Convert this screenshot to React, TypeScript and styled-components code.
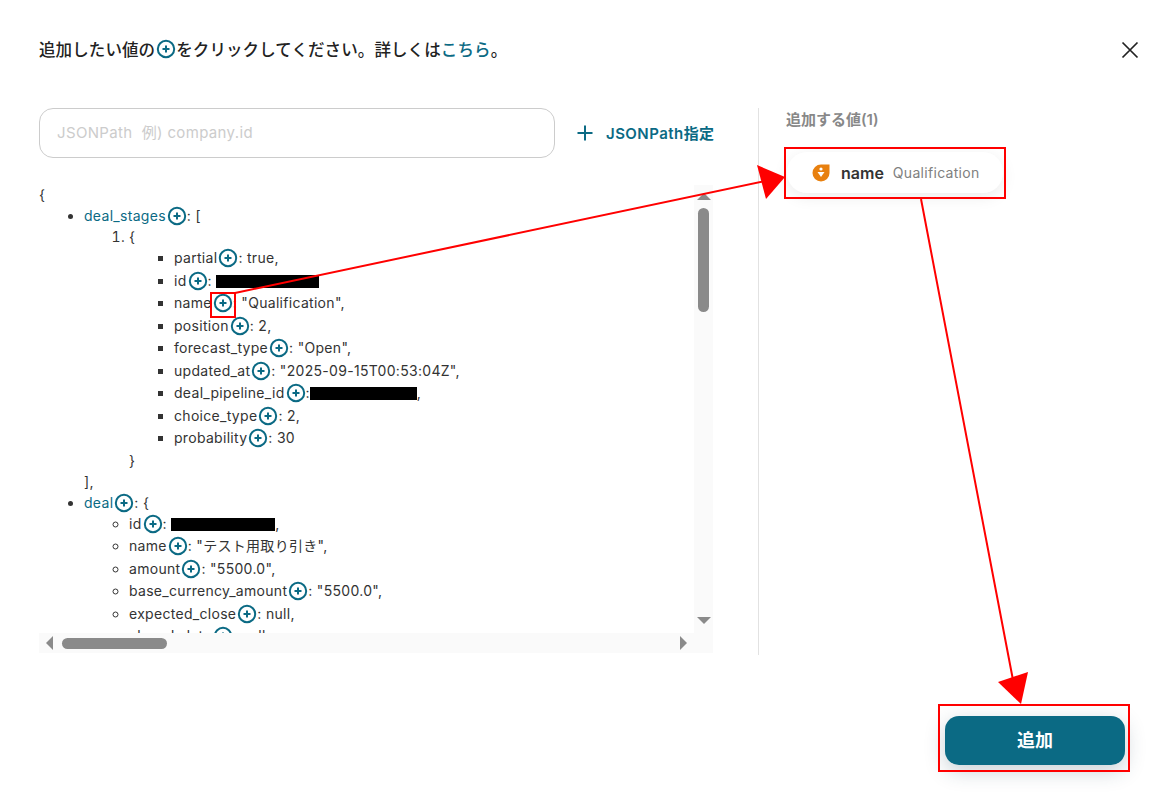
import React from "react"
import styled, {createGlobalStyle} from "styled-components"

const TEAL = "#0b6a84"

const GlobalStyle = createGlobalStyle`
  html, body {
    margin: 0;
    padding: 0;
    background: #fff;
  }
  body {
    font-family: Inter, "Noto Sans CJK JP", sans-serif;
    color: #333;
  }
`

const StyledPage = styled.div`
  position: relative;
  width: 1164px;
  height: 809px;
  overflow: hidden;
  box-sizing: border-box;
  padding: 38px 24px 0 39px;
`

const StyledHeader = styled.div`
  display: flex;
  justify-content: space-between;
  align-items: center;
  height: 24px;
`

const StyledTitle = styled.div`
  display: flex;
  align-items: center;
  margin-top: -2px;
  font-family: "Noto Sans CJK JP", sans-serif;
  font-size: 16.5px;
  letter-spacing: 0.1px;
  font-weight: 500;
  color: #222;
`

const StyledLink = styled.span`
  color: ${TEAL};
`

const StyledCloseButton = styled.div`
  display: flex;
  width: 18px;
  height: 18px;
  margin-right: 1px;
`

const StyledBody = styled.div`
  display: flex;
  margin-top: 46px;
  height: 547px;
`

const StyledLeft = styled.div`
  width: 719px;
  flex-shrink: 0;
`

const StyledSearchRow = styled.div`
  display: flex;
  align-items: center;
`

const StyledInput = styled.div`
  box-sizing: border-box;
  width: 516px;
  height: 50px;
  border: 1px solid #ccc;
  border-radius: 14px;
  padding: 0 0 3px 17px;
  display: flex;
  align-items: center;
  font-size: 15px;
  letter-spacing: 0.35px;
  color: #ccc;
`

const StyledAddPath = styled.div`
  display: flex;
  align-items: center;
  margin-left: 22px;
  gap: 13px;
  padding-bottom: 1px;
  font-size: 15px;
  letter-spacing: 0.45px;
  font-weight: 600;
  color: ${TEAL};
  white-space: nowrap;
`

const StyledTreeBox = styled.div`
  display: grid;
  grid-template-columns: 655px 19px;
  grid-template-rows: 448px 20px;
  width: 674px;
  margin-top: 27px;
`

const StyledTree = styled.div`
  overflow: hidden;
  margin-top: -1px;
  font-size: 14px;
  line-height: 21px;
  letter-spacing: 0.3px;
  white-space: nowrap;

  ul, ol {
    margin: 0;
    padding-left: 45px;
  }
`

const StyledFields = styled.ul`
  li {
    line-height: 22.5px;
  }
`

const StyledKey = styled.span`
  color: ${TEAL};
`

const StyledRedaction = styled.span<{$width: number}>`
  display: inline-block;
  width: ${p => p.$width}px;
  height: 13px;
  background: #000;
  vertical-align: -2px;
`

const StyledPlus = styled.svg`
  display: inline-block;
  width: 20px;
  height: 20px;
  margin-left: 1px;
  vertical-align: -5px;
`

const StyledVerticalBar = styled.div`
  display: flex;
  flex-direction: column;
  align-items: center;
  background: #fafafa;
  padding-top: 8px;
`

const StyledHorizontalBar = styled.div`
  display: flex;
  align-items: center;
  background: #fafafa;
  padding-left: 7px;
`

const StyledCorner = styled.div`
  background: #fafafa;
`

const StyledArrowUp = styled.div`
  border-left: 7px solid transparent;
  border-right: 7px solid transparent;
  border-bottom: 7px solid #8a8a8a;
`

const StyledArrowDown = styled.div`
  border-left: 7px solid transparent;
  border-right: 7px solid transparent;
  border-top: 7px solid #8a8a8a;
  margin-top: 305px;
`

const StyledArrowLeft = styled.div`
  border-top: 7px solid transparent;
  border-bottom: 7px solid transparent;
  border-right: 7px solid #8a8a8a;
`

const StyledArrowRight = styled.div`
  border-top: 7px solid transparent;
  border-bottom: 7px solid transparent;
  border-left: 7px solid #8a8a8a;
  margin-left: 513px;
`

const StyledThumbVertical = styled.div`
  width: 11px;
  height: 104px;
  margin-top: 8px;
  border-radius: 6px;
  background: #8a8a8a;
`

const StyledThumbHorizontal = styled.div`
  width: 105px;
  height: 11px;
  margin-left: 9px;
  border-radius: 6px;
  background: #8a8a8a;
`

const StyledRight = styled.div`
  flex: 1;
  border-left: 1px solid #e2e2e2;
  padding-left: 27px;
`

const StyledRightHeading = styled.div`
  font-size: 15px;
  font-weight: 600;
  line-height: 24px;
  color: #888;
`

const StyledChip = styled.div`
  display: flex;
  align-items: center;
  box-sizing: border-box;
  width: 216px;
  height: 41px;
  margin-top: 20px;
  margin-left: 1px;
  padding-left: 25px;
  border-radius: 20px;
  background: #fff;
  box-shadow: 0 4px 16px rgba(0, 0, 0, 0.08);
`

const StyledChipName = styled.span`
  margin-left: 11px;
  font-size: 16px;
  font-weight: 600;
  color: #333;
`

const StyledChipValue = styled.span`
  margin-left: 9px;
  font-size: 14px;
  letter-spacing: 0.3px;
  color: #808080;
`

const StyledFooter = styled.div`
  display: flex;
  justify-content: flex-end;
  margin-top: 61px;
  padding-right: 15px;
`

const StyledSubmit = styled.button`
  width: 180px;
  height: 49px;
  padding: 0 0 3px;
  border: none;
  border-radius: 14px;
  background: ${TEAL};
  color: #fff;
  font-family: "Noto Sans CJK JP", sans-serif;
  font-size: 18px;
  font-weight: 700;
  box-shadow: 0 6px 20px rgba(40, 70, 90, 0.25);
`

const StyledAnnotations = styled.svg`
  position: absolute;
  top: 0;
  left: 0;
  width: 1164px;
  height: 809px;
  pointer-events: none;
`

const Plus: React.FC = () => (
    <StyledPlus viewBox="0 0 20 20">
        <circle cx="10" cy="10" r="8.2" fill="none" stroke={TEAL} strokeWidth="2"/>
        <path d="M10 6.5v7M6.5 10h7" stroke={TEAL} strokeWidth="2" fill="none"/>
    </StyledPlus>
)

const Key: React.FC<{children: React.ReactNode}> = ({children}) => (
    <>{children}<Plus/></>
)

const Tree: React.FC = () => (
    <StyledTree>
        {"{"}
        <ul>
            <li>
                <Key><StyledKey>deal_stages</StyledKey></Key>: [
                <ol>
                    <li>
                        {"{"}
                        <StyledFields>
                            <li><Key>partial</Key>: true,</li>
                            <li><Key>id</Key>: <StyledRedaction $width={103}/></li>
                            <li><Key>name</Key>: "Qualification",</li>
                            <li><Key>position</Key>: 2,</li>
                            <li><Key>forecast_type</Key>: "Open",</li>
                            <li><Key>updated_at</Key>: "2025-09-15T00:53:04Z",</li>
                            <li><Key>deal_pipeline_id</Key>:<StyledRedaction $width={107}/>,</li>
                            <li><Key>choice_type</Key>: 2,</li>
                            <li><Key>probability</Key>: 30</li>
                        </StyledFields>
                        {"}"}
                    </li>
                </ol>
                ],
            </li>
            <li>
                <Key><StyledKey>deal</StyledKey></Key>: {"{"}
                <StyledFields>
                    <li><Key>id</Key>: <StyledRedaction $width={104}/>,</li>
                    <li><Key>name</Key>: "テスト用取り引き",</li>
                    <li><Key>amount</Key>: "5500.0",</li>
                    <li><Key>base_currency_amount</Key>: "5500.0",</li>
                    <li><Key>expected_close</Key>: null,</li>
                    <li><Key>closed_date</Key>: null,</li>
                    <li><Key>created_at</Key>: null,</li>
                </StyledFields>
            </li>
        </ul>
    </StyledTree>
)

const App: React.FC = () => (
    <StyledPage>
        <GlobalStyle/>
        <StyledHeader>
            <StyledTitle>
                追加したい値の<Plus/>をクリックしてください。詳しくは<StyledLink>こちら</StyledLink>。
            </StyledTitle>
            <StyledCloseButton>
                <svg viewBox="0 0 18 18" width="18" height="18">
                    <path d="M1.5 1.5l15 15M16.5 1.5l-15 15" stroke="#222" strokeWidth="1.7" fill="none"/>
                </svg>
            </StyledCloseButton>
        </StyledHeader>
        <StyledBody>
            <StyledLeft>
                <StyledSearchRow>
                    <StyledInput>JSONPath&nbsp;&nbsp;例) company.id</StyledInput>
                    <StyledAddPath>
                        <svg viewBox="0 0 16 16" width="16" height="16">
                            <path d="M8 .5v15M.5 8h15" stroke={TEAL} strokeWidth="2" fill="none"/>
                        </svg>
                        JSONPath指定
                    </StyledAddPath>
                </StyledSearchRow>
                <StyledTreeBox>
                    <Tree/>
                    <StyledVerticalBar>
                        <StyledArrowUp/>
                        <StyledThumbVertical/>
                        <StyledArrowDown/>
                    </StyledVerticalBar>
                    <StyledHorizontalBar>
                        <StyledArrowLeft/>
                        <StyledThumbHorizontal/>
                        <StyledArrowRight/>
                    </StyledHorizontalBar>
                    <StyledCorner/>
                </StyledTreeBox>
            </StyledLeft>
            <StyledRight>
                <StyledRightHeading>追加する値(1)</StyledRightHeading>
                <StyledChip>
                    <svg viewBox="0 0 18 18" width="18" height="18">
                        <path d="M9 .5h8.5V9A8.5 8.5 0 1 1 9 .5z" fill="#e8800f"/>
                        <circle cx="9" cy="5" r="1.6" fill="#fff"/>
                        <path d="M5.5 8h7L9 13z" fill="#fff"/>
                    </svg>
                    <StyledChipName>name</StyledChipName>
                    <StyledChipValue>Qualification</StyledChipValue>
                </StyledChip>
            </StyledRight>
        </StyledBody>
        <StyledFooter>
            <StyledSubmit>追加</StyledSubmit>
        </StyledFooter>
        <StyledAnnotations viewBox="0 0 1164 809">
            <rect x="211" y="293" width="24" height="24" fill="none" stroke="#f00" strokeWidth="2"/>
            <rect x="785" y="148" width="220" height="50" fill="none" stroke="#f00" strokeWidth="2"/>
            <rect x="939" y="705" width="190" height="66" fill="none" stroke="#f00" strokeWidth="2"/>
            <path d="M235 293L765 181M921 199L1013 680" stroke="#f00" strokeWidth="2" fill="none"/>
            <path d="M757 165L785 177L766 199z" fill="#f00"/>
            <path d="M998 682L1028 672L1021 704z" fill="#f00"/>
        </StyledAnnotations>
    </StyledPage>
)

export default App
